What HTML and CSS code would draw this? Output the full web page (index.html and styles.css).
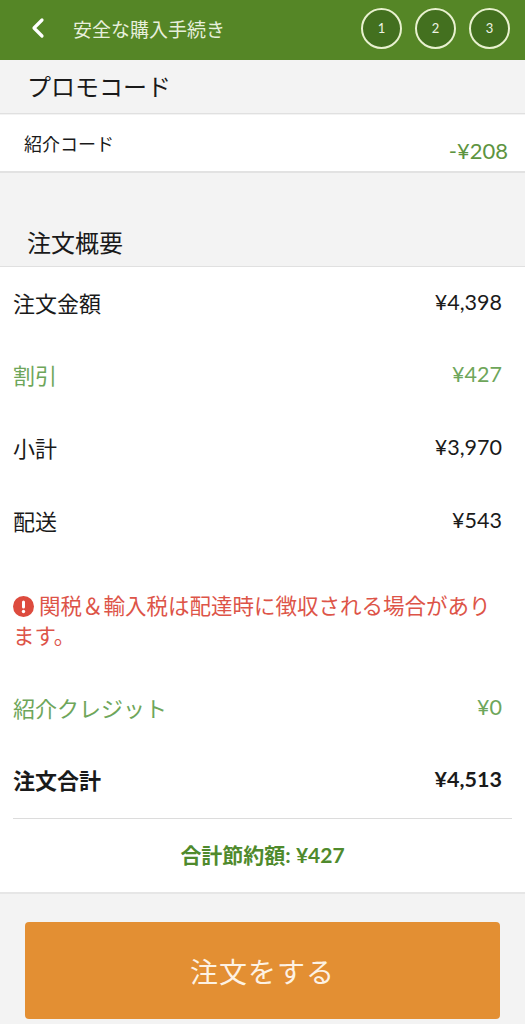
FILE: index.html
```html
<!DOCTYPE html>
<html>
	<head>
		<meta charset="UTF-8">
		<title>安全な購入手続き</title>
		<link rel="stylesheet" href="styles.css">
	</head>
	<body>
		<div class="topbar">
			<svg class="back" width="16" height="22" viewBox="0 0 16 22">
				<path d="M12 3 L4 11 L12 19" fill="none" stroke="#fff" stroke-width="3.2" stroke-linecap="round" stroke-linejoin="round"/>
			</svg>
			<div class="title">安全な購入手続き</div>
			<div class="steps">
				<span class="step">1</span>
				<span class="step">2</span>
				<span class="step">3</span>
			</div>
		</div>

		<div class="sec-head promo">プロモコード</div>
		<div class="code-row">
			<span class="code-name">紹介コード</span>
			<span class="code-val">-¥208</span>
		</div>

		<div class="sec-head summary">注文概要</div>
		<div class="summary-box">
			<div class="row"><span>注文金額</span><span class="num">¥4,398</span></div>
			<div class="row green"><span>割引</span><span class="num">¥427</span></div>
			<div class="row"><span>小計</span><span class="num">¥3,970</span></div>
			<div class="row"><span>配送</span><span class="num">¥543</span></div>
			<div class="warn"><svg class="warn-ico" width="21" height="21" viewBox="0 0 21 21">
					<circle cx="10.5" cy="10.5" r="10.5" fill="#dd4b3e"/>
					<rect x="9" y="4.5" width="3" height="8" rx="1.5" fill="#fff"/>
					<circle cx="10.5" cy="15.5" r="1.7" fill="#fff"/>
				</svg>関税＆輸入税は配達時に徴収される場合があります。</div>
			<div class="row green"><span>紹介クレジット</span><span class="num">¥0</span></div>
			<div class="row total"><span>注文合計</span><span class="num">¥4,513</span></div>
			<div class="saving">合計節約額: ¥427</div>
		</div>

		<div class="bottom">
			<button class="order-btn">注文をする</button>
		</div>
	</body>
</html>
```

FILE: styles.css
```css
* {
	margin: 0;
	padding: 0;
	box-sizing: border-box;
}

body {
	width: 525px;
	height: 1024px;
	overflow: hidden;
	background: #f3f3f3;
	font-family: Lato, "Noto Sans CJK JP", sans-serif;
	color: #1a1a1a;
}

.topbar {
	height: 60px;
	background: #558626;
	display: flex;
	align-items: center;
	padding: 0 15px 4px 30px;
}

.back {
	display: block;
	margin-right: 27px;
}

.title {
	flex: 1;
	color: #e7efdc;
	font-size: 19px;
}

.steps {
	display: flex;
	gap: 13px;
}

.step {
	width: 41px;
	height: 41px;
	border-radius: 50%;
	border: 2px solid #e8f1cf;
	background: #43701f;
	color: #eef3e4;
	font-size: 13px;
	display: flex;
	align-items: center;
	justify-content: center;
}

.sec-head {
	background: #f3f3f3;
	font-size: 24px;
	padding-left: 27px;
	border-bottom: 1px solid #e0e0e0;
}

.promo {
	height: 54px;
	line-height: 53px;
}

.code-row {
	background: #fff;
	height: 58px;
	margin-top: 1px;
	display: flex;
	justify-content: space-between;
	padding: 0 17px 0 24px;
	border-bottom: 2px solid #e2e2e2;
}

.code-name {
	font-size: 18px;
	padding-top: 15px;
}

.code-val {
	color: #5d9440;
	font-size: 22px;
	padding-top: 22px;
}

.summary {
	height: 94px;
	padding-top: 55px;
	line-height: 30px;
}

.summary-box {
	background: #fff;
	padding: 0 13px;
	border-bottom: 2px solid #e6e6e6;
}

.row {
	height: 73px;
	display: flex;
	align-items: center;
	justify-content: space-between;
	font-size: 22px;
	padding-right: 10px;
}

.row:first-child {
	height: 70px;
}

.num {
	font-size: 21.5px;
}

.green {
	color: #6ea65a;
}

.total {
	font-weight: bold;
	height: 76px;
	padding-bottom: 3px;
	border-bottom: 1px solid #dcdcdc;
}

.warn {
	color: #dd5448;
	font-size: 21.5px;
	line-height: 30px;
	padding: 35px 18px 19px 0;
}

.warn-ico {
	display: inline-block;
	margin-right: 5px;
	vertical-align: -3px;
}

.saving {
	height: 73px;
	text-align: center;
	line-height: 72px;
	color: #4f8a2c;
	font-weight: bold;
	font-size: 21px;
}

.bottom {
	padding: 28px 25px 0 25px;
}

.order-btn {
	width: 475px;
	height: 97px;
	border: none;
	border-radius: 4px;
	background: #e38f33;
	color: #fdf2e4;
	font-family: Lato, "Noto Sans CJK JP", sans-serif;
	font-size: 28px;
	letter-spacing: 1px;
}
```
